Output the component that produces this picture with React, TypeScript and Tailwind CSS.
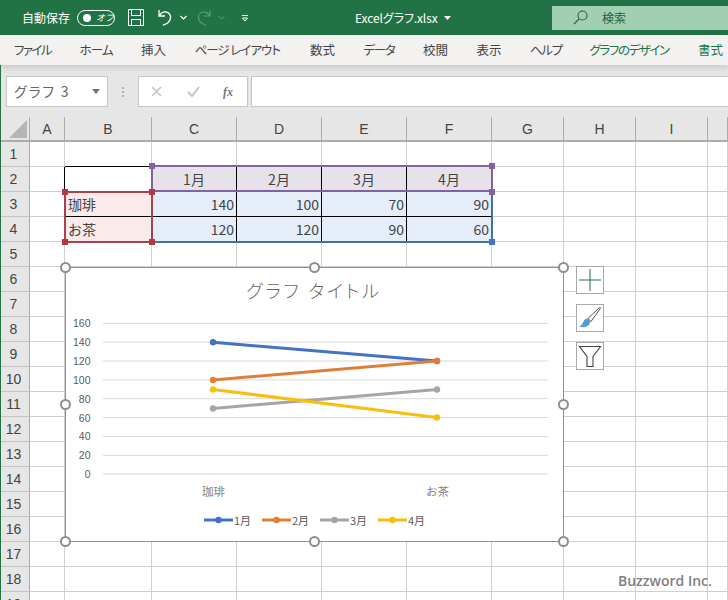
const JP = "font-['Noto_Sans_CJK_JP','Liberation_Sans',sans-serif]"

const tabs = [
  { label: 'ファイル', w: 'w-[38px] tracking-[-1.600px]' },
  { label: 'ホーム', w: 'w-[34px] tracking-[-0.800px]' },
  { label: '挿入', w: 'w-[26px]' },
  { label: 'ページ レイアウト', w: 'w-[88px] tracking-[-1px]' },
  { label: '数式', w: 'w-[26px]' },
  { label: 'データ', w: 'w-[32px] tracking-[-1.300px]' },
  { label: '校閲', w: 'w-[26px]' },
  { label: '表示', w: 'w-[26px]' },
  { label: 'ヘルプ', w: 'w-[32px] tracking-[-1.300px]' },
]

const cols = ['A', 'B', 'C', 'D', 'E', 'F', 'G', 'H', 'I', '']
const rows = Array.from({ length: 19 }, (_, i) => i + 1)

const cells: Record<string, { text: string; right?: boolean }> = {
  C2: { text: '1月' },
  D2: { text: '2月' },
  E2: { text: '3月' },
  F2: { text: '4月' },
  B3: { text: '珈琲', right: false },
  B4: { text: 'お茶', right: false },
  C3: { text: '140', right: true },
  D3: { text: '100', right: true },
  E3: { text: '70', right: true },
  F3: { text: '90', right: true },
  C4: { text: '120', right: true },
  D4: { text: '120', right: true },
  E4: { text: '90', right: true },
  F4: { text: '60', right: true },
}

function cellClass(id: string) {
  if (id === 'B1') return 'bg-white border-b-black border-r-[#d0d0d0]'
  if (id === 'A2') return 'bg-white border-r-black border-b-[#d0d0d0]'
  if (id === 'B3') return 'bg-[#fbeaea] border-b-black border-r-[#fbeaea]'
  if (id === 'B4') return 'bg-[#fbeaea] border-b-[#fbeaea] border-r-[#fbeaea]'
  if (id === 'C2' || id === 'D2' || id === 'E2') return 'bg-[#e7e2ea] border-r-black border-b-[#e7e2ea]'
  if (id === 'F2') return 'bg-[#e7e2ea] border-r-[#e7e2ea] border-b-[#e7e2ea]'
  if (id === 'C3' || id === 'D3' || id === 'E3') return 'bg-[#e5edf9] border-r-black border-b-black'
  if (id === 'F3') return 'bg-[#e5edf9] border-r-[#e5edf9] border-b-black'
  if (id === 'C4' || id === 'D4' || id === 'E4') return 'bg-[#e5edf9] border-r-black border-b-[#e5edf9]'
  if (id === 'F4') return 'bg-[#e5edf9] border-r-[#e5edf9] border-b-[#e5edf9]'
  return 'bg-white border-r-[#d0d0d0] border-b-[#d0d0d0]'
}

const series = [
  { name: '1月', color: '#4472c4', a: 342.3, b: 361 },
  { name: '2月', color: '#e07d3a', a: 380, b: 361 },
  { name: '3月', color: '#a5a5a5', a: 408.5, b: 389.5 },
  { name: '4月', color: '#f7c010', a: 389.5, b: 417.5 },
]

const axis = [
  { label: '160', y: 323.3 },
  { label: '140', y: 342.1 },
  { label: '120', y: 361 },
  { label: '100', y: 379.9 },
  { label: '80', y: 398.7 },
  { label: '60', y: 417.5 },
  { label: '40', y: 436.4 },
  { label: '20', y: 455.3 },
  { label: '0', y: 474 },
]

function Knob({ className }: { className: string }) {
  return <div className={`absolute h-[11px] w-[11px] rounded-full border-2 border-[#8e8e8e] bg-white ${className}`} />
}

function Grip({ className }: { className: string }) {
  return <div className={`absolute h-[6px] w-[6px] ${className}`} />
}

function TitleBar() {
  return (
    <div className={`flex h-[35px] items-center bg-[#217346] pl-[22px] text-white ${JP}`}>
      <span className="w-[48px] text-[12px] [font-feature-settings:'palt']">自動保存</span>
      <div className="ml-[7px] flex h-[16px] w-[38px] items-center rounded-full border border-white pl-[5px]">
        <div className="h-[8px] w-[8px] rounded-full bg-white" />
        <span className="ml-[5px] text-[9px] italic leading-none">オフ</span>
      </div>
      <svg className="ml-[13px]" width="16" height="17" viewBox="0 0 16 17" fill="none" stroke="white" strokeWidth="1">
        <path d="M.5.5h15v16H.5zM3.5.5v6h9v-6M3.5 16.5v-6h9v6" />
      </svg>
      <svg className="ml-[13px]" width="16" height="18" viewBox="0 0 16 18" fill="none" stroke="white" strokeWidth="1.3">
        <path d="M2 1v6h6M2 7c2-3 4.500-4.500 7-4 3 .5 5 3 4.500 6-.5 3.500-3.500 6-7.500 7" />
      </svg>
      <svg className="ml-[7px]" width="7" height="5" viewBox="0 0 7 5" fill="none" stroke="white" strokeWidth="1.2">
        <path d="M.5 1l3 3 3-3" />
      </svg>
      <svg className="ml-[9px]" width="16" height="18" viewBox="0 0 16 18" fill="none" stroke="#5d9c78" strokeWidth="1.2">
        <path d="M14 1v6H8M14 7c-2-3-4.500-4.500-7-4-3 .5-5 3-4.500 6 .5 3.500 3.500 6 7.500 7" />
      </svg>
      <svg className="ml-[6px]" width="7" height="5" viewBox="0 0 7 5" fill="none" stroke="#5d9c78" strokeWidth="1">
        <path d="M.5 1l3 3 3-3" />
      </svg>
      <svg className="ml-[16px]" width="8" height="8" viewBox="0 0 8 8" fill="none" stroke="white" strokeWidth="1">
        <path d="M1 1.500h6M1.500 4h5l-2.500 3z" />
      </svg>
      <span className="ml-[106px] w-[83px] whitespace-nowrap text-[12px] tracking-[-0.100px] [font-feature-settings:'palt']">Excelグラフ.xlsx</span>
      <svg className="ml-[6px]" width="7" height="4" viewBox="0 0 7 4" fill="white">
        <path d="M0 0h7L3.500 4z" />
      </svg>
      <div className="ml-[101px] flex h-[24px] flex-1 items-center bg-[#a0cfb1] pl-[21px] text-[#2c5e42]">
        <svg width="15" height="15" viewBox="0 0 15 15" fill="none" stroke="#2c5e42" strokeWidth="1.1">
          <circle cx="9.500" cy="5.500" r="4.500" />
          <path d="M6 9l-5 5" />
        </svg>
        <span className="ml-[14px] text-[12px]">検索</span>
      </div>
    </div>
  )
}

function RibbonTabs() {
  return (
    <div className={`relative z-10 flex h-[30px] items-center gap-[27.500px] bg-[#f3f2f1] pl-[14px] text-[12.500px] text-[#444] shadow-[0_3px_6px_rgba(0,0,0,0.13)] ${JP}`}>
      {tabs.map((t) => (
        <span key={t.label} className={`${t.w} shrink-0 whitespace-nowrap [font-feature-settings:'palt']`}>
          {t.label}
        </span>
      ))}
      <span className="w-[81px] shrink-0 whitespace-nowrap tracking-[-1.400px] text-[#217346] [font-feature-settings:'palt']">グラフのデザイン</span>
      <span className="w-[26px] shrink-0 whitespace-nowrap text-[#217346]">書式</span>
    </div>
  )
}

function FormulaBar() {
  return (
    <div className={`flex h-[52px] items-start bg-[#e6e6e6] pl-[6px] pt-[11px] ${JP}`}>
      <div className="flex h-[31px] w-[102px] items-center border border-[#c6c6c6] bg-white pl-[7px] pr-[7px] text-[14px] text-[#666]">
        <span className="flex-1 tracking-[1.800px] [font-feature-settings:'palt']">グラフ 3</span>
        <svg width="8" height="5" viewBox="0 0 8 5" fill="#777">
          <path d="M0 0h8L4 5z" />
        </svg>
      </div>
      <div className="flex h-[31px] w-[30px] flex-col items-center justify-center gap-[2px]">
        <div className="h-[2px] w-[2px] bg-[#b0b0b0]" />
        <div className="h-[2px] w-[2px] bg-[#b0b0b0]" />
        <div className="h-[2px] w-[2px] bg-[#b0b0b0]" />
      </div>
      <div className="flex h-[31px] w-[110px] items-center border border-[#c6c6c6] bg-white pl-[12px]">
        <svg width="11" height="11" viewBox="0 0 11 11" stroke="#c4c4c4" strokeWidth="1.500" fill="none">
          <path d="M1 1l9 9M10 1l-9 9" />
        </svg>
        <svg className="ml-[25px]" width="13" height="11" viewBox="0 0 13 11" stroke="#c4c4c4" strokeWidth="2" fill="none">
          <path d="M1 6l4 4 7-9" />
        </svg>
        <span className="ml-[23px] font-['Liberation_Serif',serif] text-[12px] font-bold italic text-[#777]">fx</span>
      </div>
      <div className="ml-[3px] h-[31px] flex-1 border border-r-0 border-[#c6c6c6] bg-white" />
    </div>
  )
}

function Sheet() {
  return (
    <div className={`grid grid-cols-[30px_35px_87px_85px_85px_85px_85px_72px_72px_72px_20px] grid-rows-[25px] auto-rows-[25px] text-[14px] leading-none text-[#444] ${JP}`}>
      <div className="flex items-end justify-end border-b-2 border-r border-[#ababab] bg-[#e6e6e6] pb-[2px] pr-[2px]">
        <svg width="18" height="18" viewBox="0 0 18 18" fill="#b5b5b5">
          <path d="M18 0v18H0z" />
        </svg>
      </div>
      {cols.map((c, i) => (
        <div key={i} className="flex items-center justify-center border-b-2 border-r border-[#ababab] bg-[#e6e6e6] font-['Liberation_Sans',sans-serif] text-[14px]">
          {c}
        </div>
      ))}
      {rows.map((r) => (
        <div key={r} className="contents">
          <div className="flex items-center justify-center border-b border-r border-b-[#c4c4c4] border-r-[#ababab] bg-[#e6e6e6] pb-[1px] pr-[2px] font-['Liberation_Sans',sans-serif]">{r}</div>
          {cols.map((c, i) => {
            const id = `${c}${r}`
            const cell = cells[id]
            return (
              <div
                key={i}
                className={`flex items-center border-b border-r pb-[1px] ${cellClass(id)} ${
                  !cell ? '' : cell.right === undefined ? 'justify-center' : cell.right ? 'justify-end pr-[2px]' : 'justify-start pl-[3px]'
                }`}
              >
                {cell?.text}
              </div>
            )
          })}
        </div>
      ))}
    </div>
  )
}

function Selections() {
  return (
    <>
      <div className="absolute left-[150.500px] top-[165px] h-[27px] w-[342px] border-2 border-[#8064a2]" />
      <div className="absolute left-[150.500px] top-[216px] h-[26.500px] w-[342px] border-b-2 border-r-2 border-[#41719c]" />
      <div className="absolute left-[490.500px] top-[192px] h-[50px] w-[2px] bg-[#41719c]" />
      <div className="absolute left-[64px] top-[190.500px] h-[52px] w-[89px] border-2 border-[#a5444c]" />
      <Grip className="left-[149px] top-[163px] bg-[#8064a2]" />
      <Grip className="left-[488.500px] top-[163px] bg-[#8064a2]" />
      <Grip className="left-[488.500px] top-[188.500px] bg-[#8064a2]" />
      <Grip className="left-[61.500px] top-[188.500px] bg-[#b3383f]" />
      <Grip className="left-[149px] top-[188.500px] bg-[#b3383f]" />
      <Grip className="left-[61.500px] top-[238.500px] bg-[#b3383f]" />
      <Grip className="left-[149px] top-[238.500px] bg-[#b3383f]" />
      <Grip className="left-[488.500px] top-[238.500px] bg-[#4472c4]" />
    </>
  )
}

function Chart() {
  return (
    <div className={`absolute left-[64.500px] top-[266.500px] flex h-[275px] w-[499px] flex-col items-center border-[1.500px] border-[#8f8f8f] bg-white ${JP}`}>
      <div className="mt-[9px] h-[26px] text-[18px] font-light leading-[26px] tracking-[2.800px] text-[#666] [font-feature-settings:'palt']">グラフ タイトル</div>
      <svg width="496" height="200" viewBox="66 303 496 200" className="shrink-0">
        {axis.map((a) => (
          <g key={a.label}>
            <line x1="103" x2="548" y1={a.y} y2={a.y} stroke="#d9d9d9" strokeWidth="1" />
            <text x="90.500" y={a.y + 4} textAnchor="end" fontSize="10.500" fill="#595959" fontFamily="Liberation Sans">
              {a.label}
            </text>
          </g>
        ))}
        {series.map((s) => (
          <g key={s.name}>
            <line x1="213" x2="437" y1={s.a} y2={s.b} stroke={s.color} strokeWidth="3" />
            <circle cx="213" cy={s.a} r="3.200" fill={s.color} />
            <circle cx="437" cy={s.b} r="3.200" fill={s.color} />
          </g>
        ))}
        <text x="213.500" y="495.500" textAnchor="middle" fontSize="11.500" fill="#7f7f7f">珈琲</text>
        <text x="437.500" y="495.500" textAnchor="middle" fontSize="11.500" fill="#7f7f7f">お茶</text>
      </svg>
      <div className="mt-[10px] flex gap-[12px] text-[11px] leading-[14px] text-[#595959]">
        {series.map((s) => (
          <div key={s.name} className="flex items-center gap-[1px]">
            <svg width="29" height="8" viewBox="0 0 29 8">
              <line x1="0" x2="29" y1="4" y2="4" stroke={s.color} strokeWidth="3" />
              <circle cx="14.500" cy="4" r="3.200" fill={s.color} />
            </svg>
            <span className="w-[16px] whitespace-nowrap">{s.name}</span>
          </div>
        ))}
      </div>
    </div>
  )
}

function ChartTools() {
  return (
    <div className="absolute left-[576px] top-[266px] flex flex-col gap-[10px]">
      <div className="flex h-[28px] w-[28px] items-center justify-center border border-[#a9a9a9] bg-white">
        <svg width="22" height="22" viewBox="0 0 22 22" stroke="#217346" strokeWidth="1" fill="none">
          <path d="M11 0v22M0 11h22" />
        </svg>
      </div>
      <div className="flex h-[28px] w-[28px] items-center justify-center border border-[#a9a9a9] bg-white">
        <svg width="24" height="24" viewBox="0 0 24 24">
          <path d="M10 12.500L21.500 1.500c.8-.3 1 .2.8 1L13 15.500z" fill="white" stroke="#555" strokeWidth="1" />
          <path d="M9.500 12.500c-3 0-3.500 2.500-5 5-.8 1.500-2 2.500-3.500 3 4 1.500 10 1 11.500-5z" fill="#5b9bd5" />
        </svg>
      </div>
      <div className="flex h-[28px] w-[28px] items-center justify-center border border-[#a9a9a9] bg-white">
        <svg width="24" height="24" viewBox="0 0 24 24" fill="white" stroke="#444" strokeWidth="1.100">
          <path d="M1.500 2.500h21L15 12.500v10H9v-10z" />
        </svg>
      </div>
    </div>
  )
}

export default function App() {
  return (
    <div className="relative h-[600px] w-[728px] overflow-hidden bg-[#e6e6e6]">
      <TitleBar />
      <RibbonTabs />
      <FormulaBar />
      <Sheet />
      <div className="absolute bottom-0 left-0 top-[65px] z-20 w-[1px] bg-[#217346]" />
      <Selections />
      <Chart />
      <Knob className="left-[60px] top-[261.500px]" />
      <Knob className="left-[308.500px] top-[261.500px]" />
      <Knob className="left-[557.500px] top-[261.500px]" />
      <Knob className="left-[60px] top-[398.500px]" />
      <Knob className="left-[557.500px] top-[398.500px]" />
      <Knob className="left-[60px] top-[535.500px]" />
      <Knob className="left-[308.500px] top-[535.500px]" />
      <Knob className="left-[557.500px] top-[535.500px]" />
      <ChartTools />
      <div className="absolute left-[618px] top-[570px] font-['Open_Sans',sans-serif] text-[14px] font-semibold text-[#808080]">Buzzword Inc.</div>
    </div>
  )
}
